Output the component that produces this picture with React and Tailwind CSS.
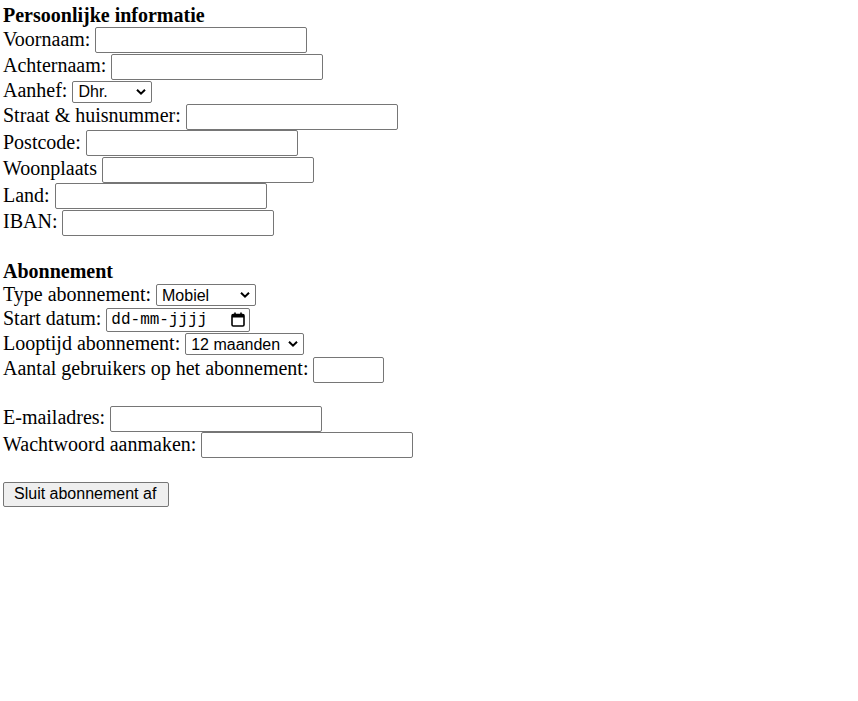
const inputCls = "h-[26px] border border-[#767676] rounded-[2px] bg-white";

const Chevron = () => (
  <svg
    className="pointer-events-none absolute right-[6px] top-1/2 -translate-y-1/2"
    width="10"
    height="7"
    viewBox="0 0 10 7"
    fill="none"
  >
    <path d="M1 1.2 5 5.2 9 1.2" stroke="#000" strokeWidth="2" />
  </svg>
);

const Select = ({ width, value, options }) => (
  <span className="relative inline-flex">
    <select
      defaultValue={value}
      className={`${width} h-[22px] appearance-none border border-[#767676] rounded-[2px] bg-white pl-[5px] font-['Liberation_Sans',sans-serif] text-[16px] leading-[normal] text-black`}
    >
      {options.map((o) => (
        <option key={o}>{o}</option>
      ))}
    </select>
    <Chevron />
  </span>
);

const CalendarIcon = () => (
  <svg width="14" height="15" viewBox="0 0 14 15" fill="none">
    <rect x="1" y="2.5" width="12" height="11.5" rx="1.2" stroke="#000" strokeWidth="1.6" />
    <rect x="1" y="2.5" width="12" height="3" fill="#000" />
    <path d="M4 0.5V3M10 0.5V3" stroke="#000" strokeWidth="1.6" />
  </svg>
);

const App = () => {
  return (
    <div className="min-h-screen bg-white pl-[3px] font-['Liberation_Serif',serif] text-[20px] leading-[normal] text-black">
      {/* Persoonlijke informatie */}
      <div className="flex h-[27px] items-end">
        <b>Persoonlijke informatie</b>
      </div>
      <div className="flex h-[26.5px] items-center gap-[5px]">
        <span className="pb-[2px]">Voornaam:</span>
        <input type="text" className={`w-[212px] ${inputCls}`} />
      </div>
      <div className="flex h-[26.5px] items-center gap-[5px]">
        <span className="pb-[2px]">Achternaam:</span>
        <input type="text" className={`w-[212px] ${inputCls}`} />
      </div>
      <div className="flex h-[23.5px] items-center gap-[5px]">
        <span className="pb-[2px]">Aanhef:</span>
        <Select width="w-[80px]" value="Dhr." options={["Dhr.", "Mevr."]} />
      </div>
      <div className="flex h-[26.5px] items-center gap-[5px]">
        <span className="pb-[2px]">Straat &amp; huisnummer:</span>
        <input type="text" className={`w-[212px] ${inputCls}`} />
      </div>
      <div className="flex h-[26.5px] items-center gap-[5px]">
        <span className="pb-[2px]">Postcode:</span>
        <input type="text" className={`w-[212px] ${inputCls}`} />
      </div>
      <div className="flex h-[26.5px] items-center gap-[5px]">
        <span className="pb-[2px]">Woonplaats</span>
        <input type="text" className={`w-[212px] ${inputCls}`} />
      </div>
      <div className="flex h-[26.5px] items-center gap-[5px]">
        <span className="pb-[2px]">Land:</span>
        <input type="text" className={`w-[212px] ${inputCls}`} />
      </div>
      <div className="flex h-[26.5px] items-center gap-[5px]">
        <span className="pb-[2px]">IBAN:</span>
        <input type="text" className={`w-[212px] ${inputCls}`} />
      </div>

      {/* Abonnement */}
      <div className="h-[23px]" />
      <div className="flex h-[24px] items-center">
        <b>Abonnement</b>
      </div>
      <div className="flex h-[24px] items-center gap-[5px]">
        <span className="pb-[2px]">Type abonnement:</span>
        <Select width="w-[100px]" value="Mobiel" options={["Mobiel", "Internet", "TV"]} />
      </div>
      <div className="flex h-[25px] items-center gap-[5px]">
        <span className="pb-[2px]">Start datum:</span>
        <div className="flex h-[24px] w-[144px] items-center justify-between rounded-[2px] border border-[#767676] bg-white pl-[4px] pr-[4px]">
          <span className="font-['Liberation_Mono',monospace] text-[16px]">dd-mm-jjjj</span>
          <CalendarIcon />
        </div>
      </div>
      <div className="flex h-[24px] items-center gap-[5px]">
        <span className="pb-[2px]">Looptijd abonnement:</span>
        <Select width="w-[119px]" value="12 maanden" options={["12 maanden", "24 maanden"]} />
      </div>
      <div className="flex h-[27px] items-center gap-[5px]">
        <span className="pb-[2px]">Aantal gebruikers op het abonnement:</span>
        <input type="text" className={`w-[71px] ${inputCls}`} />
      </div>

      {/* Account */}
      <div className="h-[22.5px]" />
      <div className="flex h-[26.5px] items-center gap-[5px]">
        <span className="pb-[2px]">E-mailadres:</span>
        <input type="email" className={`w-[212px] ${inputCls}`} />
      </div>
      <div className="flex h-[26.5px] items-center gap-[5px]">
        <span className="pb-[2px]">Wachtwoord aanmaken:</span>
        <input type="password" className={`w-[212px] ${inputCls}`} />
      </div>
      <div className="h-[23px]" />
      <div className="flex">
        <button className="h-[25px] rounded-[2px] border border-[#767676] bg-[#efefef] pl-[10px] pr-[12px] font-['Liberation_Sans',sans-serif] text-[16px] text-black">
          Sluit abonnement af
        </button>
      </div>
    </div>
  );
};

export default App;
